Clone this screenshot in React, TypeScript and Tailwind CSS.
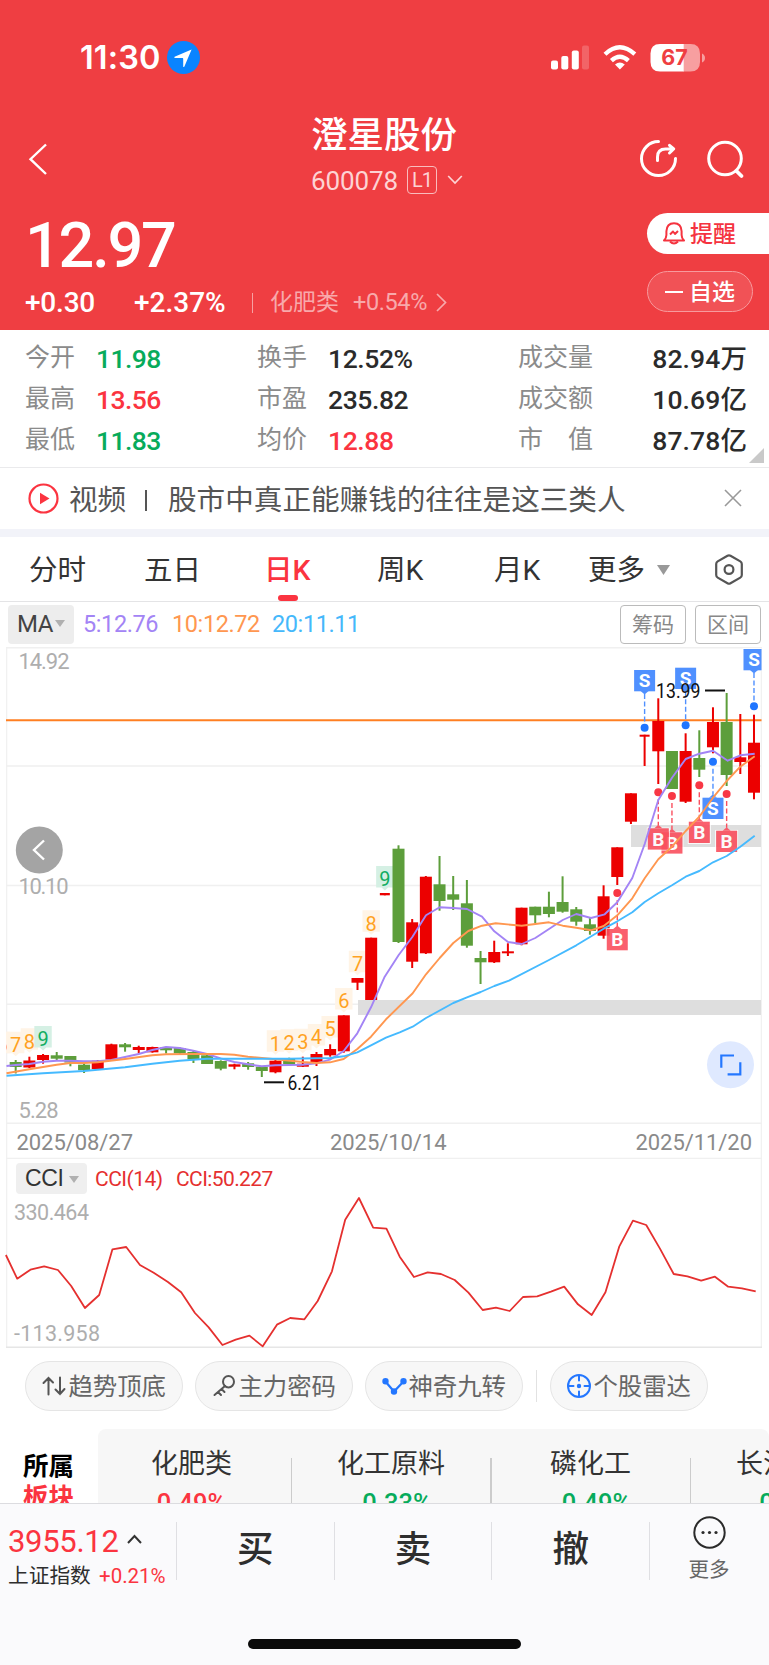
import type { ReactNode } from 'react';

const RED = '#ec0000';
const GREEN = '#5d9e3b';

// 차례대로: 몸통 위, 몸통 아래, 꼬리 위, 꼬리 아래, 상승 여부
type Candle = [number, number, number, number, boolean];

const STEP = 13.672;
const FIRST_X = 15.7;

const candles: Candle[] = [
  [1062, 1067, 1060, 1073.5, false],
  [1060.5, 1067.5, 1056.7, 1068, true],
  [1055, 1060, 1054, 1063.7, true],
  [1055.3, 1058.7, 1052, 1060.3, false],
  [1056, 1062.5, 1056, 1066.3, false],
  [1064.7, 1070.3, 1063.3, 1073, false],
  [1060.7, 1069, 1060, 1069, true],
  [1044.3, 1059.7, 1043.7, 1060.7, true],
  [1044.3, 1047.3, 1043, 1051.7, false],
  [1047, 1050, 1045.7, 1053.3, true],
  [1047, 1052.3, 1046.7, 1052.7, true],
  [1047.3, 1050.3, 1047, 1053.5, false],
  [1048, 1053.3, 1047.3, 1054, false],
  [1052, 1059.3, 1051, 1063, false],
  [1055.3, 1064, 1055, 1064, false],
  [1061, 1068.7, 1060.3, 1070.3, false],
  [1064.3, 1066.7, 1063.7, 1069.3, true],
  [1063.3, 1067, 1062, 1069.7, false],
  [1066.7, 1071, 1066.7, 1077, false],
  [1060.7, 1072.3, 1060, 1073.3, true],
  [1059, 1064, 1057.7, 1064.7, false],
  [1063.7, 1066.7, 1056.7, 1067, true],
  [1054, 1062, 1052, 1066, true],
  [1049, 1055.3, 1044.3, 1056.7, true],
  [1015.3, 1051.3, 1015.3, 1052.7, true],
  [978, 982.7, 978, 990, true],
  [937.7, 1000, 937.7, 1000, true],
  [893, 895.3, 893, 895.3, true],
  [848.7, 942, 845.3, 943, false],
  [922.3, 961.7, 919, 968, true],
  [876.7, 953.3, 876, 954, true],
  [884.3, 901, 856, 910.7, false],
  [894.3, 899.7, 876, 910, false],
  [903.3, 945.7, 880, 947.7, false],
  [958, 962.3, 951, 984, false],
  [952, 962.3, 940.7, 963, true],
  [951.3, 953.3, 943.3, 956, true],
  [907.7, 944.3, 907.7, 945.3, true],
  [906.7, 915.3, 906.7, 923, false],
  [906.7, 914, 891.7, 917.3, false],
  [902, 911.7, 876.3, 912.7, false],
  [909.3, 921.7, 907, 925.7, false],
  [924.3, 931, 918, 934.7, false],
  [896.3, 935.7, 885.3, 938.7, true],
  [847.3, 877, 847.3, 885, true],
  [793.3, 821.7, 793.3, 824, true],
  [734.7, 736.7, 734.7, 766, true],
  [721, 751.3, 698.3, 784, true],
  [751, 789, 751, 789, false],
  [751, 801.7, 733.3, 803, true],
  [758, 769.7, 730.3, 777, false],
  [722, 747.3, 707.3, 753.3, true],
  [722, 775, 693, 786, false],
  [757.3, 762, 714, 774, true],
  [742.7, 792.7, 714.7, 799.3, true],
];

const ma5 =
  '6.5,1066 15.7,1065 29.3,1064 43,1061.7 56.7,1060.7 70.3,1060.7 84,1061.3 97.7,1061.3 111.3,1060 125,1057 138.7,1054 152.3,1050 166,1047 179.7,1048 193.3,1050.7 207,1054 220.7,1058.3 234.3,1062 248,1064.3 261.7,1066.3 275.3,1065.3 289,1065 302.7,1064.7 316.3,1063.3 330,1059.7 343.7,1051 357.3,1033.3 371,1007.3 384.7,976.7 398.7,955 412.3,937 426,915.3 439.7,907.3 453.3,908 467,909 482,916.7 494.3,931.3 508,942 521.7,944 535.3,938 549,929 562.7,920 576.3,914 591,918 604.7,914.3 617.3,902.3 632.3,878 644.7,844 658.3,800 672,777.7 685.7,759 699.3,753.7 713,750.7 727.7,760.7 740.3,755.3 754.7,753.7';
const ma10 =
  '6.5,1073.3 29.3,1069.3 56.7,1064.7 70.3,1063 84,1063 97.7,1062.3 125,1059 152.3,1055.3 166,1054.3 193.3,1054 220.7,1054 234.3,1054.7 248,1056.7 275.3,1059.3 302.7,1062 316.3,1063 330,1062.3 343.7,1059 357.3,1049 371,1036.7 386,1019.3 412.7,993.3 426,974.3 439.7,958 453.3,943 468.3,931 482,925.7 495.7,923.3 521.7,925.7 549,922.3 562.7,925.7 576.3,927.7 591,930.3 603.7,926 617.3,915.3 632.3,898.3 644.7,878.3 658.3,859.3 672,846.7 685.7,831 699.3,816.7 713,797.7 726.7,781 740.3,766.7 754.7,756.3';
const ma20 =
  '6.5,1075.7 43,1073.3 84,1071 97.7,1069.7 125,1067.3 152.3,1063.7 179.7,1060.7 207,1058.7 234.3,1058.7 289,1058.7 330,1058 343.7,1056.3 357.3,1052.3 371,1045.3 386,1037.7 399.7,1032.3 412.7,1026.7 426,1018 453.3,1003 467,997.3 480.7,992 494.3,986 509,980.7 549,960 576.3,945.3 603.7,928.7 617.3,921.3 632.3,912.3 644.7,902 658.3,893.3 672,885.3 685.7,876.7 699.3,871 713,862.3 726.7,856 740.3,846.7 754.7,835.7';

// [캔들 번호, 박스 위쪽 y, 숫자]
const counts: [number, number, number][] = [
  [0, 1031.7, 7],
  [1, 1028.3, 8],
  [2, 1026, 9],
  [19, 1030.3, 1],
  [20, 1029.3, 2],
  [21, 1028.7, 3],
  [22, 1024, 4],
  [23, 1016, 5],
  [24, 988, 6],
  [25, 950.7, 7],
  [26, 910.3, 8],
  [27, 866, 9],
];

// [캔들 번호, 박스 위쪽 y, 점 y]
const sells: [number, number, number][] = [
  [46, 670, 727.7],
  [49, 667.7, 725.3],
  [54, 649, 706.3],
  [51, 797.7, 761.7],
];
const buys: [number, number, number][] = [
  [44, 929, 893],
  [48, 832.3, 796],
  [47, 828.3, 792.3],
  [50, 821.7, 785.3],
  [52, 830.7, 794],
];

const cciPoints: [number, number][] = [
  [12, 315], [35, 386], [62, 359], [90, 349], [118, 360], [145, 408], [173, 474], [202, 435],
  [229, 298], [257, 291], [285, 345], [313, 368], [342, 396], [369, 427], [397, 489], [425, 532],
  [453, 585], [480, 569], [508, 557], [535, 589], [564, 524], [591, 504], [620, 508], [647, 453],
  [676, 364], [703, 209], [731, 144], [760, 233], [787, 236], [814, 320], [843, 381], [871, 367],
  [898, 372], [926, 390], [954, 428], [983, 480], [1010, 473], [1038, 483], [1065, 441],
  [1094, 439], [1122, 425], [1149, 410], [1177, 463], [1205, 495], [1233, 427], [1261, 290],
  [1289, 212], [1316, 225], [1344, 296], [1372, 372], [1400, 379], [1428, 392], [1456, 380],
  [1483, 410], [1511, 415], [1539, 424],
];

const candleX = (i: number) => FIRST_X + STEP * i;

interface MarkerProps {
  kind: 'S' | 'B';
  x: number;
  top: number;
  dot: number;
}

const Marker = ({ kind, x, top, dot }: MarkerProps) => {
  const above = top < dot;
  const fill = kind === 'S' ? '#4f90ff' : '#fa4f5e';
  const dotFill = kind === 'S' ? '#1f75ff' : '#f83745';
  const lineStart = above ? top + 24 : dot + 7;
  const lineEnd = above ? dot - 3 : top - 3;
  const tip = above
    ? `M${x - 4} ${top + 21}L${x} ${top + 24.5}L${x + 4} ${top + 21}Z`
    : `M${x - 4} ${top}L${x} ${top - 3.5}L${x + 4} ${top}Z`;

  return (
    <g>
      <path
        d={`M${x} ${lineStart}V${lineEnd}`}
        stroke={fill}
        strokeWidth="1.4"
        strokeDasharray="5 2.5"
      />
      <circle cx={x} cy={dot} r="4" fill={dotFill} />
      <g opacity={kind === 'B' ? 0.9 : 1}>
        <rect x={x - 11} y={top - 0.3} width="22" height="22" fill="none" stroke="#fff" />
        <path d={tip} fill={fill} />
        <rect x={x - 10.5} y={top} width="21" height="21.3" fill={fill} />
        <text
          x={x}
          y={top + 17.4}
          textAnchor="middle"
          fontSize="19"
          fontWeight="700"
          fill="#fff">
          {kind}
        </text>
      </g>
    </g>
  );
};

const KLineChart = () => (
  <svg
    width="769"
    height="512"
    viewBox="0 647 769 512"
    className="block font-normal">
    <defs>
      <clipPath id="plot">
        <rect x="6" y="647" width="755.5" height="512" />
      </clipPath>
    </defs>
    <g stroke="#f0f0f0" strokeWidth="1.5">
      <path d="M6 647.8H762M6 766H762M6 885.5H762M6 1004.3H762M6 1123.3H762M6 1158.4H762" />
      <path d="M6.7 647V1159M761.3 647V1159" strokeWidth="1.2" />
    </g>
    <g fill="#dedede">
      <rect x="631" y="825" width="130" height="22" />
      <rect x="358" y="1000" width="403" height="15" />
    </g>
    <path d="M6 720.2H761.5" stroke="#ff7f22" strokeWidth="2" />

    <g fill="#aeaeae" fontSize="22">
      <text x="18.5" y="669.3" textLength="51">14.92</text>
      <text x="18.5" y="894.2" textLength="50">10.10</text>
      <text x="18.5" y="1118.4" textLength="40">5.28</text>
    </g>
    <g fill="#8a8a8a" fontSize="22">
      <text x="16.5" y="1150.3" textLength="116.5">2025/08/27</text>
      <text x="330" y="1150.3" textLength="116.5">2025/10/14</text>
      <text x="635.5" y="1150.3" textLength="116.5">2025/11/20</text>
    </g>

    <g clipPath="url(#plot)">
      <rect x="0" y="1031.7" width="10" height="21.5" fill="#fff4e6" />
      <text x="2" y="1052" textAnchor="middle" fontSize="20" fill="#ffa21f">
        6
      </text>
      {counts.map(([i, top, n]) => {
        const x = candleX(i);
        const bg = n === 9 ? '#d5f0e4' : '#fff4e6';
        return (
          <g key={i}>
            <path
              d={`M${x - 8.7} ${top}h17.4v21.5h-5.4l-3.3 3l-3.3-3h-5.4z`}
              fill={bg}
            />
            <text
              x={x}
              y={top + 20.3}
              textAnchor="middle"
              fontSize="20"
              fill={n === 9 ? '#12ad62' : '#ffa21f'}>
              {n}
            </text>
          </g>
        );
      })}

      {candles.map(([top, bottom, high, low, up], i) => {
        const x = candleX(i);
        const half = i === 27 || i === 46 ? 5 : 6;
        return (
          <g key={i} fill={up ? RED : GREEN}>
            <rect x={x - 1} y={high} width="2" height={low - high} />
            <rect x={x - half} y={top} width={half * 2} height={bottom - top} />
          </g>
        );
      })}

      {sells.map(([i, top, dot]) => (
        <Marker key={i} kind="S" x={candleX(i)} top={top} dot={dot} />
      ))}
      {buys.map(([i, top, dot]) => (
        <Marker key={i} kind="B" x={candleX(i)} top={top} dot={dot} />
      ))}

      <g fill="none" strokeWidth="1.9" strokeLinejoin="round">
        <polyline points={ma5} stroke="#a384f5" />
        <polyline points={ma10} stroke="#ff9750" />
        <polyline points={ma20} stroke="#45baff" />
      </g>
    </g>

    <g fill="#111" fontSize="20">
      <text x="656" y="697.8" textLength="44.5" lengthAdjust="spacingAndGlyphs">
        13.99
      </text>
      <text x="287.5" y="1090.2" textLength="34" lengthAdjust="spacingAndGlyphs">
        6.21
      </text>
      <rect x="705" y="689.5" width="20" height="2" />
      <rect x="264" y="1081.3" width="20" height="2" />
    </g>

    <circle cx="39.3" cy="850" r="23.5" fill="#a4a4a4" />
    <path d="M44 840.5L34 850L44 859.5" fill="none" stroke="#fff" strokeWidth="2.4" />
    <circle cx="730.5" cy="1064.8" r="23.5" fill="#dfe9ff" />
    <path
      d="M721.3 1067.7V1055.5H734M740.3 1062.2V1074.4H727.6"
      fill="none"
      stroke="#2477ff"
      strokeWidth="2.2"
    />
  </svg>
);

const CciChart = () => (
  <svg width="769" height="154" viewBox="0 1194 769 154" className="block overflow-visible">
    <path d="M6.7 1159V1347M761.3 1159V1347" stroke="#f0f0f0" strokeWidth="1.2" />
    <path d="M6 1347.2H762" stroke="#e6e6e6" strokeWidth="1.6" />
    <g fill="#aeaeae" fontSize="21.5">
      <text x="14" y="1220.2" textLength="75">330.464</text>
      <text x="14" y="1341" textLength="86">-113.958</text>
    </g>
    <polyline
      points={cciPoints.map(([x, y]) => `${x / 2.0365},${1150 + y / 3}`).join(' ')}
      fill="none"
      stroke="#e5302f"
      strokeWidth="1.8"
      strokeLinejoin="round"
    />
  </svg>
);

const StatusBar = () => (
  <div className="flex h-[115px] items-center pl-[80px]">
    <span className="pt-0.5 [font-family:Inter,sans-serif] text-[32.5px] font-semibold tracking-[0.1px]">
      11:30
    </span>
    <svg width="33" height="33" viewBox="0 0 33 33" className="absolute left-[167px]">
      <circle cx="16.5" cy="16.5" r="16.5" fill="#0a84ff" />
      <path
        d="M24.6 8.4L7.6 15.8Q6.6 16.8 8 17.1H15.6Q16.2 17.2 16.2 17.9V25.4Q16.6 26.5 17.4 25.4Z"
        fill="#fff"
      />
    </svg>
    <svg width="155" height="28" viewBox="0 0 155 28" className="absolute left-[551px]">
      <g fill="#fff">
        <rect x="0" y="16.5" width="7" height="9" rx="2" />
        <rect x="10.3" y="12" width="7" height="13.5" rx="2" />
        <rect x="20.8" y="6.5" width="7" height="19" rx="2" />
        <rect x="31" y="1.5" width="7" height="24" rx="2" opacity=".2" />
      </g>
      <g fill="none" stroke="#fff" strokeWidth="4.3">
        <path d="M54 10.2Q68.8 -3.6 83.8 10.2" />
        <path d="M60.4 16.6Q68.8 8.8 77.4 16.6" />
      </g>
      <path d="M64 20.6Q68.8 16.4 73.8 20.6L68.9 25.6Z" fill="#fff" />
      <path
        d="M109 0H133V27.5H109Q99.5 27.5 99.5 18V9.5Q99.5 0 109 0Z"
        fill="#fff"
      />
      <path
        d="M132.7 0H139.5Q149 0 149 9.5V18Q149 27.5 139.5 27.5H132.7Z"
        fill="#f79fa0"
      />
      <path d="M151 9.5Q154 11 154 14T151 18.5Z" fill="#f79fa0" />
      <text
        x="123.5"
        y="21.3"
        textAnchor="middle"
        fontSize="21.5"
        fontWeight="700"
        fill="#ef3e42"
        className="[font-family:Inter,sans-serif]">
        67
      </text>
    </svg>
  </div>
);

const Header = () => (
  <header className="relative h-[330px] bg-[#ef3e42] text-white">
    <StatusBar />

    {/* 종목 이름 */}
    <div className="flex h-[88px]">
      <svg width="311" height="88" viewBox="0 0 311 88" className="shrink-0">
        <path d="M46 29.5L30.5 44.2L46 59" fill="none" stroke="#fff" strokeWidth="2.4" />
      </svg>
      <div className="flex-1">
        <h1 className="h-[43px] text-[36.5px] leading-[42px] font-medium">澄星股份</h1>
        <div className="flex h-[45px] items-center pb-1">
          <span className="w-[96px] pt-1 text-[26px] tracking-[-0.1px] text-[#fdd3d4]">
            600078
          </span>
          <span className="mt-0.5 flex h-[28px] w-[30px] items-center justify-center rounded-[4px] border border-[#f9bcbd] text-[20px] tracking-[-1px] text-[#fdd3d4]">
            L1
          </span>
          <svg width="16" height="10" viewBox="0 0 16 10" className="mt-0.5 ml-2.5">
            <path d="M1.2 1L8 8L14.8 1" fill="none" stroke="#fdd3d4" strokeWidth="1.7" />
          </svg>
        </div>
      </div>
      <svg
        width="130"
        height="88"
        viewBox="639 115 130 88"
        fill="none"
        stroke="#fff"
        strokeWidth="3"
        strokeLinecap="round"
        strokeLinejoin="round">
        <path d="M658.5 141.6A17 17 0 1 0 675.5 158.5" />
        <path d="M657.5 160.5V157Q657.5 149 665.5 149H673.5M669.5 145.3L673.7 149L669.5 153" />
        <circle cx="725" cy="158.5" r="16.3" />
        <path d="M736.5 171L741.5 176" strokeWidth="3.8" />
      </svg>
    </div>

    {/* 현재가 */}
    <div className="flex justify-between">
      <div className="pl-[25px]">
        <div className="h-[82px] text-[63px] leading-[85px] font-medium tracking-[-2.2px]">
          12.97
        </div>
        <div className="flex h-[36px] items-center text-[28px] font-medium">
          <span className="w-[109px] tracking-[-0.2px]">+0.30</span>
          <span className="w-[118px]">+2.37%</span>
          <span className="mr-[17px] h-5 w-px bg-[#f7a0a2]" />
          <span className="w-[83px] pb-0.5 text-[23px] font-normal text-[#f8a9ab]">化肥类</span>
          <span className="w-[81px] text-[23.5px] font-normal tracking-[-0.4px] text-[#f8a9ab]">
            +0.54%
          </span>
          <svg width="11" height="19" viewBox="0 0 11 19" className="mb-0.5 ml-0.5">
            <path d="M1 1L9.5 9.5L1 18" fill="none" stroke="#f8a9ab" strokeWidth="1.7" />
          </svg>
        </div>
      </div>
      <div className="flex w-[122px] flex-col gap-[17px] pt-[10px] text-[23px] font-medium">
        <button className="flex h-[41px] items-center rounded-l-full bg-white pl-4 text-[#f5333f]">
          <svg
            width="22"
            height="23"
            viewBox="0 0 22 23"
            fill="none"
            stroke="#f5333f"
            strokeWidth="2"
            strokeLinejoin="round"
            className="mr-[5px]">
            <path d="M1 18.5Q3.4 16 3.4 13V9.2Q3.8 1.2 11 1.2T18.6 9.2V13Q18.6 16 21 18.5Z" />
            <path d="M7 19.5Q11 23.5 15 19.5M7 12.5L10 9.5L12 12L15 9" />
          </svg>
          <span className="pt-0.5">提醒</span>
        </button>
        <button className="flex h-[41px] w-[106px] items-center rounded-full border-[1.5px] border-[#f79a9d] bg-[#f15256] pl-[17px]">
          <span className="mr-[6px] h-0.5 w-[18px] bg-white" />
          <span className="pt-0.5">自选</span>
        </button>
      </div>
    </div>
  </header>
);

const UP = 'text-[#fb3440]';
const DOWN = 'text-[#07ab5b]';
const FLAT = 'text-[#2b2b2b]';

const quotes = [
  ['今开', '11.98', DOWN, '换手', '12.52%', FLAT, '成交量', '82.94万'],
  ['最高', '13.56', UP, '市盈', '235.82', FLAT, '成交额', '10.69亿'],
  ['最低', '11.83', DOWN, '均价', '12.88', UP, '市　值', '87.78亿'],
];

const QuoteTable = () => (
  <div className="relative h-[137.5px] border-b-[1.5px] border-[#eaeaec] pt-[7px]">
    {quotes.map(([a, av, ac, b, bv, bc, c, cv]) => (
      <div
        key={a}
        className="flex h-[41px] items-center pr-[22px] pl-[25px] text-[26.5px] font-medium tracking-[-0.4px]">
        <span className="w-[71px] text-[25px] font-normal tracking-normal text-[#8b8b8b]">
          {a}
        </span>
        <span className={`w-[161px] pt-1 tracking-[-0.6px] ${ac}`}>{av}</span>
        <span className="w-[71px] text-[25px] font-normal tracking-normal text-[#8b8b8b]">
          {b}
        </span>
        <span className={`w-[190px] pt-1 ${bc}`}>{bv}</span>
        <span className="text-[25px] font-normal tracking-normal text-[#8b8b8b]">{c}</span>
        <span className="ml-auto pt-1 tracking-[0.1px] text-[#2b2b2b]">{cv}</span>
      </div>
    ))}
    <svg width="15" height="15" className="absolute top-[118px] left-[749px]">
      <path d="M15 0V15H0Z" fill="#c9c9c9" />
    </svg>
  </div>
);

const VideoTip = () => (
  <div className="box-border flex h-[69.5px] items-center border-b-8 border-[#f2f3f9] pl-7 text-[28.6px] text-[#555]">
    <svg width="31" height="31" viewBox="0 0 31 31" fill="none">
      <circle cx="15.5" cy="15.5" r="14" stroke="#fb3440" strokeWidth="2.2" />
      <path d="M12 9.8V21.2L21.5 15.5Z" fill="#fb3440" />
    </svg>
    <span className="ml-[10px] w-[76px] pt-1">视频</span>
    <span className="mt-1 h-[21px] w-0.5 bg-[#555]" />
    <span className="ml-[21px] pt-1">股市中真正能赚钱的往往是这三类人</span>
    <svg width="18" height="18" viewBox="0 0 18 18" className="mr-[27px] ml-auto">
      <path d="M1 1L17 17M17 1L1 17" stroke="#999" strokeWidth="1.6" />
    </svg>
  </div>
);

const periods: [string, string][] = [
  ['分时', 'w-[115px]'],
  ['五日', 'w-[120px]'],
  ['日K', 'w-[113px]'],
  ['周K', 'w-[117px]'],
  ['月K', 'w-[94px]'],
];

const PeriodTabs = () => (
  <div className="relative flex h-[65px] items-center border-b-[1.5px] border-[#e4e4e6] pl-[29px] text-[28.5px] text-[#333]">
    {periods.map(([label, width]) => (
      <span
        key={label}
        className={`${width} pt-[5px] ${label === '日K' ? 'font-medium text-[#fb3440]' : ''}`}>
        {label}
      </span>
    ))}
    <span className="w-[69px] pt-[5px]">更多</span>
    <svg width="13" height="10" viewBox="0 0 13 10" className="mt-0.5">
      <path d="M0 0H13L6.5 10Z" fill="#999" />
    </svg>
    <svg
      width="28"
      height="31"
      viewBox="0 0 28 31"
      fill="none"
      stroke="#555"
      strokeWidth="2.2"
      strokeLinejoin="round"
      className="ml-[45px]">
      <path d="M12.5 1.8Q14 1 15.5 1.8L25.3 7.4Q26.8 8.3 26.8 10V21Q26.8 22.7 25.3 23.6L15.5 29.2Q14 30 12.5 29.2L2.7 23.6Q1.2 22.7 1.2 21V10Q1.2 8.3 2.7 7.4Z" />
      <circle cx="14" cy="15.5" r="4.4" />
    </svg>
    <span className="absolute bottom-0 left-[278px] h-1.5 w-5 rounded-[3px] bg-[#fb3440]" />
  </div>
);

const Caret = ({ className }: { className: string }) => (
  <svg width="10" height="7" viewBox="0 0 10 7" className={className}>
    <path d="M0 0H10L5 7Z" fill="#b0b0b0" />
  </svg>
);

const MaBar = () => (
  <div className="flex h-[45px] items-center pr-2 pb-px pl-2 text-[23.5px] tracking-[-0.4px]">
    <span className="mr-[9px] flex h-[39px] w-[66px] items-center rounded-[4px] bg-[#ededed] pl-[9px] text-[24px] text-[#444]">
      MA
      <Caret className="mt-[-2px] ml-0.5" />
    </span>
    <span className="w-[89px] pt-0.5 text-[#a384f5]">5:12.76</span>
    <span className="w-[100px] pt-0.5 text-[#ff9750]">10:12.72</span>
    <span className="pt-0.5 text-[#45b8fb]">20:11.11</span>
    <span className="mr-[9px] ml-auto flex h-[39px] w-[66px] items-center justify-center rounded-[4px] border-[1.5px] border-[#bbb] pt-0.5 text-[21px] tracking-normal text-[#888]">
      筹码
    </span>
    <span className="flex h-[39px] w-[66px] items-center justify-center rounded-[4px] border-[1.5px] border-[#bbb] pt-0.5 text-[21px] tracking-normal text-[#888]">
      区间
    </span>
  </div>
);

const CciBar = () => (
  <div className="flex h-[35px] items-center pt-1 pl-4 text-[21px] text-[#e5302f]">
    <span className="flex h-[30.5px] w-[71px] items-center rounded-[4px] bg-[#efefef] pl-[9px] [font-family:'Liberation_Sans',sans-serif] text-[23px] tracking-[-0.4px] text-[#333]">
      CCI
      <Caret className="mt-0.5 ml-[6px]" />
    </span>
    <span className="ml-2 w-[81px] pt-0.5 tracking-[-0.5px]">CCI(14)</span>
    <span className="pt-0.5 tracking-[-0.6px]">CCI:50.227</span>
  </div>
);

const ToolPill = ({ icon, label }: { icon: ReactNode; label: string }) => (
  <button className="flex h-[50px] w-[158px] shrink-0 items-center justify-end rounded-full border-[1.5px] border-[#e5e5e5] bg-[#f7f7f7] pr-[16px] text-[24.4px] text-[#666]">
    <svg
      width="26"
      height="24"
      viewBox="0 0 26 24"
      fill="none"
      stroke="#555"
      strokeWidth="2"
      strokeLinecap="round">
      {icon}
    </svg>
    <span className="pt-0.5">{label}</span>
  </button>
);

const Tools = () => (
  <div className="flex h-[81px] items-start pt-[13px] pl-[25px]">
    <ToolPill
      label="趋势顶底"
      icon={<path d="M6.5 20.5V4M1.5 9L6.5 4L11 8.5M18 3.5V20M13.5 15.5L18 20L22.5 15" />}
    />
    <span className="w-3" />
    <ToolPill
      label="主力密码"
      icon={
        <>
          <ellipse cx="16.5" cy="7.7" rx="5.5" ry="5.7" />
          <path d="M13 12L2.5 21M6 18L9 21M9.5 15L12.5 18" />
        </>
      }
    />
    <span className="w-3" />
    <ToolPill
      label="神奇九转"
      icon={
        <g stroke="#2477ff" fill="#2477ff">
          <path d="M3 7L12 17.5L22 7" fill="none" strokeWidth="2.2" />
          <circle cx="3.5" cy="7.3" r="2.2" />
          <circle cx="12" cy="17.5" r="2.2" />
          <circle cx="21.5" cy="7.3" r="2.2" />
        </g>
      }
    />
    <span className="mx-[13px] mt-[9px] h-8 w-px bg-[#e2e2e2]" />
    <ToolPill
      label="个股雷达"
      icon={
        <g stroke="#2477ff">
          <circle cx="12" cy="12" r="11" />
          <path d="M12 2V6.5M12 17.5V22M2 12H6.5M17.5 12H22" />
          <circle cx="12" cy="12" r="1.2" fill="#2477ff" />
        </g>
      }
    />
  </div>
);

const sectors: [string, string, string][] = [
  ['化肥类', '0.49%', 'text-[#fb3440]'],
  ['化工原料', '0.33%', 'pl-3 text-[#07ab5b]'],
  ['磷化工', '0.49%', 'pl-3 text-[#07ab5b]'],
  ['长江三角', '0.24%', 'pl-2 text-[#07ab5b]'],
];

const Sectors = () => (
  <div className="flex h-[74px] overflow-hidden">
    <div className="w-[98px] shrink-0 pt-[22px] pl-[23px] text-[25.5px] leading-[31px] font-bold text-black">
      所属
      <br />
      <span className="text-[#fb3440]">板块</span>
    </div>
    <div className="flex h-[120px] flex-1 overflow-hidden rounded-tl-[8px] rounded-tr-[8px] bg-[#f7f7f7]">
      {sectors.map(([name, rate, color], i) => (
        <div key={name} className="flex shrink-0">
          <div
            className={`w-[198px] pt-[16px] text-center text-[27px] leading-[38px] text-[#333] ${i === 0 ? 'ml-[-5.5px]' : ''}`}>
            {name}
            <div className={`text-[25.5px] leading-[41px] font-medium ${color}`}>{rate}</div>
          </div>
          <span className="mt-[29px] w-[1.5px] bg-[#ccc]" />
        </div>
      ))}
    </div>
  </div>
);

const TradeBar = () => (
  <footer className="relative flex h-[162px] items-start border-t-[1.5px] border-[#dcdce0] bg-[#fafafc] text-[#2e2e2e]">
    <div className="w-[176px] pl-[8px] pt-[17px]">
      <div className="flex h-[40px] items-center text-[31px] tracking-[-0.3px] text-[#fb3440]">
        <span className="w-[119px]">3955.12</span>
        <svg width="15" height="10" viewBox="0 0 15 10" className="mb-1">
          <path d="M1 9L7.5 2L14 9" fill="none" stroke="#333" strokeWidth="2" />
        </svg>
      </div>
      <div className="flex h-[30px] items-center text-[20.7px]">
        <span className="w-[91px]">上证指数</span>
        <span className="text-[20.5px] text-[#fb3440]">+0.21%</span>
      </div>
    </div>
    {['买', '卖', '撤'].map((label) => (
      <button
        key={label}
        className="mt-[18px] h-[58px] w-[157.7px] border-l-[1.5px] border-[#dfdfe3] pb-1 text-[36.5px] leading-[56px] font-medium">
        {label}
      </button>
    ))}
    <div className="mt-[18px] flex h-[58px] flex-1 flex-col items-center border-l-[1.5px] border-[#dfdfe3] pr-px text-[20.5px] text-[#666]">
      <svg width="33" height="33" viewBox="0 0 33 33" className="mt-[-6px] shrink-0">
        <circle cx="16.5" cy="16.5" r="15.2" fill="none" stroke="#2b2b2b" strokeWidth="2" />
        <g fill="#2b2b2b">
          <circle cx="10" cy="16.5" r="1.6" />
          <circle cx="16.5" cy="16.5" r="1.6" />
          <circle cx="23" cy="16.5" r="1.6" />
        </g>
      </svg>
      <span className="mt-1.5 leading-[30px]">更多</span>
    </div>
    <span className="absolute top-[135px] left-[248px] h-[10px] w-[273px] rounded-full bg-[#0a0a0a]" />
  </footer>
);

export default function App() {
  return (
    <div className="h-[1665px] w-[769px] overflow-hidden bg-white leading-none [font-family:Roboto,'Noto_Sans_CJK_SC',sans-serif]">
      <Header />
      <QuoteTable />
      <VideoTip />
      <PeriodTabs />
      <MaBar />
      <KLineChart />
      <CciBar />
      <CciChart />
      <Tools />
      <Sectors />
      <TradeBar />
    </div>
  );
}
